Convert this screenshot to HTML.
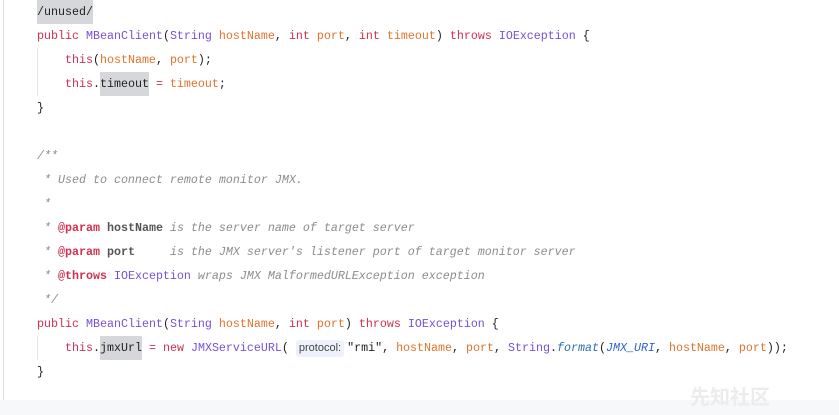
<!DOCTYPE html>
<html><head><style>
body{margin:0;width:839px;height:415px;background:#fff;position:relative;overflow:hidden;font-family:"Liberation Mono",monospace;font-size:11.67px;}
.l{position:absolute;left:37px;height:24px;line-height:24px;white-space:pre;color:#1f1f1f}
.k{color:#d1304f}.c{color:#7a4fd6}.p{color:#e0742a}.cm{color:#8c8c8c;font-style:italic}
.tg{color:#d1304f;font-weight:bold;font-style:normal}.b{color:#555;font-weight:bold;font-style:normal}
.h{background:#d5d7da;display:inline-block;height:24px;line-height:24px;vertical-align:top}.it{color:#2f5fcf;font-style:italic}.f{color:#2a6fb0;font-style:italic}
.hint{display:inline-block;background:#edf2fa;color:#444;font-family:"Liberation Sans",sans-serif;font-size:11px;line-height:17px;padding:0 3px;border-radius:3px;margin-right:3px}
.g{position:absolute;left:3px;width:1px;background:#e0e0e0}
.ib{position:absolute;left:37px;width:1px;background:#e4e4e4}
</style></head><body>
<div class="g" style="top:0;height:400px"></div>
<div class="ib" style="top:48px;height:48px"></div>
<div class="ib" style="top:336px;height:24px"></div>
<div class="l" style="top:0"><span class="h">/unused/</span></div>
<div class="l" style="top:24px"><span class="k">public</span> <span class="c">MBeanClient</span>(<span class="c">String</span> <span class="p">hostName</span>, <span class="k">int</span> <span class="p">port</span>, <span class="k">int</span> <span class="p">timeout</span>) <span class="k">throws</span> <span class="c">IOException</span> {</div>
<div class="l" style="top:48px">    <span class="k">this</span>(<span class="p">hostName</span>, <span class="p">port</span>);</div>
<div class="l" style="top:72px">    <span class="k">this</span>.<span class="h">timeout</span> <span class="k">=</span> <span class="p">timeout</span>;</div>
<div class="l" style="top:96px">}</div>
<div class="l cm" style="top:144px">/**</div>
<div class="l cm" style="top:168px"> * Used to connect remote monitor JMX.</div>
<div class="l cm" style="top:192px"> *</div>
<div class="l cm" style="top:216px"> * <span class="tg">@param</span> <span class="b">hostName</span> is the server name of target server</div>
<div class="l cm" style="top:240px"> * <span class="tg">@param</span> <span class="b">port</span>     is the JMX server's listener port of target monitor server</div>
<div class="l cm" style="top:264px"> * <span class="tg">@throws</span> <span class="c" style="font-style:normal">IOException</span> wraps JMX MalformedURLException exception</div>
<div class="l cm" style="top:288px"> */</div>
<div class="l" style="top:312px"><span class="k">public</span> <span class="c">MBeanClient</span>(<span class="c">String</span> <span class="p">hostName</span>, <span class="k">int</span> <span class="p">port</span>) <span class="k">throws</span> <span class="c">IOException</span> {</div>
<div class="l" style="top:336px">    <span class="k">this</span>.<span class="h">jmxUrl</span> <span class="k">=</span> <span class="k">new</span> <span class="c">JMXServiceURL</span>( <span class="hint">protocol:</span>"rmi", <span class="p">hostName</span>, <span class="p">port</span>, <span class="c">String</span>.<span class="f">format</span>(<span class="it">JMX_URI</span>, <span class="p">hostName</span>, <span class="p">port</span>));</div>
<div class="l" style="top:360px">}</div>
<div style="position:absolute;left:0;top:400px;width:839px;height:15px;background:#f7f8fa"></div>
<div style="position:absolute;left:690px;top:381px;color:#ececec;font-family:'Noto Sans CJK SC',sans-serif;font-size:20px;font-weight:bold">先知社区</div>
</body></html>
